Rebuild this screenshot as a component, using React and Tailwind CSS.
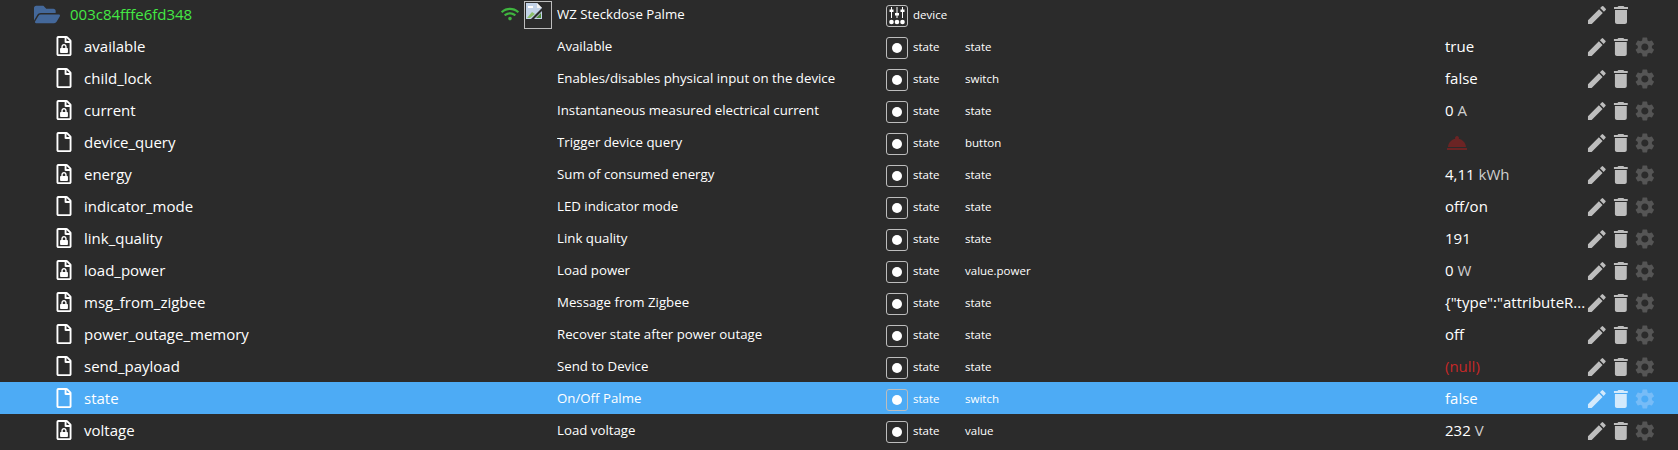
import React from "react";
import { FaFolderOpen, FaRegFile, FaLock, FaWifi } from "react-icons/fa";
import { MdEdit, MdDelete, MdSettings, MdRoomService } from "react-icons/md";

const rows = [
	{ name: "available", locked: true, desc: "Available", role: "state", value: "true" },
	{ name: "child_lock", desc: "Enables/disables physical input on the device", role: "switch", value: "false" },
	{ name: "current", locked: true, desc: "Instantaneous measured electrical current", role: "state", value: "0", unit: "A" },
	{ name: "device_query", desc: "Trigger device query", role: "button", bell: true },
	{ name: "energy", locked: true, desc: "Sum of consumed energy", role: "state", value: "4,11", unit: "kWh" },
	{ name: "indicator_mode", desc: "LED indicator mode", role: "state", value: "off/on" },
	{ name: "link_quality", locked: true, desc: "Link quality", role: "state", value: "191" },
	{ name: "load_power", locked: true, desc: "Load power", role: "value.power", value: "0", unit: "W" },
	{ name: "msg_from_zigbee", locked: true, desc: "Message from Zigbee", role: "state", value: '{"type":"attributeR...' },
	{ name: "power_outage_memory", desc: "Recover state after power outage", role: "state", value: "off" },
	{ name: "send_payload", desc: "Send to Device", role: "state", value: "(null)", isNull: true },
	{ name: "state", desc: "On/Off Palme", role: "switch", value: "false", selected: true },
	{ name: "voltage", locked: true, desc: "Load voltage", role: "value", value: "232", unit: "V" },
];

const FileIcon = ({ locked }) => (
	<span className="relative flex h-[20px] w-[16px] items-center justify-center text-white">
		<FaRegFile className="h-[20px] w-[16px]" />
		{locked && <FaLock className="absolute bottom-[3px] left-[4px] h-[9px] w-[8px]" />}
	</span>
);

const BrokenImage = () => (
	<svg viewBox="0 0 16 16" className="h-[16px] w-[16px]">
		<path d="M0 0h11l5 5v11H0z" fill="#c3d3e8" />
		<path d="M11 0l5 5h-5z" fill="#f2f2f2" />
		<path d="M2 3h5v2H2z" fill="#fff" />
		<path d="M1 15l5-6 3 2-5 4z" fill="#8cc06a" />
		<path d="M10 15l5-5v5z" fill="#4f8a3a" />
		<path d="M5 16L16 5v3l-8 8z" fill="#2b2b2b" />
	</svg>
);

const DeviceIcon = () => (
	<span className="mt-[4px] flex h-[22px] w-[22px] items-center justify-center rounded-[3px] border border-[#bdbdbd]">
		<svg viewBox="0 0 20 20" className="h-[20px] w-[20px]" fill="#fff">
			<path d="M4 1h1v11H4zM9.500 1h1v11h-1zM15 1h1v11h-1z" />
			<path d="M2.500 3.500h4v2.500h-4zM8 7h4v2.500H8zM13.500 3.500h4v2.500h-4z" />
			<circle cx="4.500" cy="16" r="2.300" />
			<circle cx="10" cy="16" r="2.300" />
			<circle cx="15.500" cy="16" r="2.300" />
		</svg>
	</span>
);

const StateIcon = () => (
	<span className="mt-[4px] flex h-[22px] w-[22px] items-center justify-center rounded-[3px] border border-[#bdbdbd]">
		<span className="h-[10px] w-[10px] rounded-full bg-white" />
	</span>
);

const Actions = ({ selected, hasGear = true }) => (
	<div className="mt-[2px] flex w-[72px] items-center">
		<MdEdit className={`h-[24px] w-[24px] ${selected ? "text-[#d4eafc]" : "text-[#bdbdbd]"}`} />
		<MdDelete className={`h-[24px] w-[24px] ${selected ? "text-[#d4eafc]" : "text-[#bdbdbd]"}`} />
		{hasGear && <MdSettings className={`ml-[1px] h-[24px] w-[24px] ${selected ? "text-[#77bcf7]" : "text-[#555555]"}`} />}
	</div>
);

const Row = ({ row }) => (
	<div className={`flex h-[32px] items-center text-white ${row.selected ? "bg-[#4dabf5]" : ""}`}>
		<div className="flex w-[557px] items-center pl-[56px]">
			<FileIcon locked={row.locked} />
			<span className="ml-[12px] text-[15px]">{row.name}</span>
		</div>
		<div className="w-[329px] truncate pt-[1px] text-[13.25px]">{row.desc}</div>
		<div className="flex w-[79px] items-center gap-[5px]">
			<StateIcon />
			<span className="pt-[1px] text-[11.5px]">state</span>
		</div>
		<div className="w-[480px] pt-[1px] text-[11.5px]">{row.role}</div>
		<div className="w-[140px] text-[15px]">
			{row.bell && <MdRoomService className="mt-[2px] h-[24px] w-[24px] text-[#6b2424]" />}
			{!row.bell && (
				<span className={row.isNull ? "text-[#c62828]" : ""}>
					{row.value}
					{row.unit && <span className="text-[#cfcfcf]"> {row.unit}</span>}
				</span>
			)}
		</div>
		<Actions selected={row.selected} />
	</div>
);

export default function App() {
	return (
		<div className="h-[450px] overflow-hidden bg-[#2b2b2b] font-['Open_Sans',sans-serif]">
			<div className="-mt-[2px]">
				<div className="flex h-[32px] items-center text-white">
					<div className="flex w-[524px] items-center pl-[34px]">
						<FaFolderOpen className="h-[25px] w-[26px] text-[#44689a]" />
						<span className="ml-[10px] text-[15px] text-[#44e844]">003c84fffe6fd348</span>
						<FaWifi className="ml-auto mr-[5px] h-[18px] w-[18px] text-[#3fb53f]" />
					</div>
					<div className="mt-[2px] flex h-[28px] w-[28px] shrink-0 items-start border border-[#bdbdbd] p-[1px]">
						<BrokenImage />
					</div>
					<div className="w-[334px] pl-[5px] pt-[1px] text-[13.25px]">WZ Steckdose Palme</div>
					<div className="flex w-[699px] items-center gap-[5px]">
						<DeviceIcon />
						<span className="pt-[1px] text-[11.5px]">device</span>
					</div>
					<Actions hasGear={false} />
				</div>
				{rows.map((row) => (
					<Row key={row.name} row={row} />
				))}
			</div>
		</div>
	);
}
